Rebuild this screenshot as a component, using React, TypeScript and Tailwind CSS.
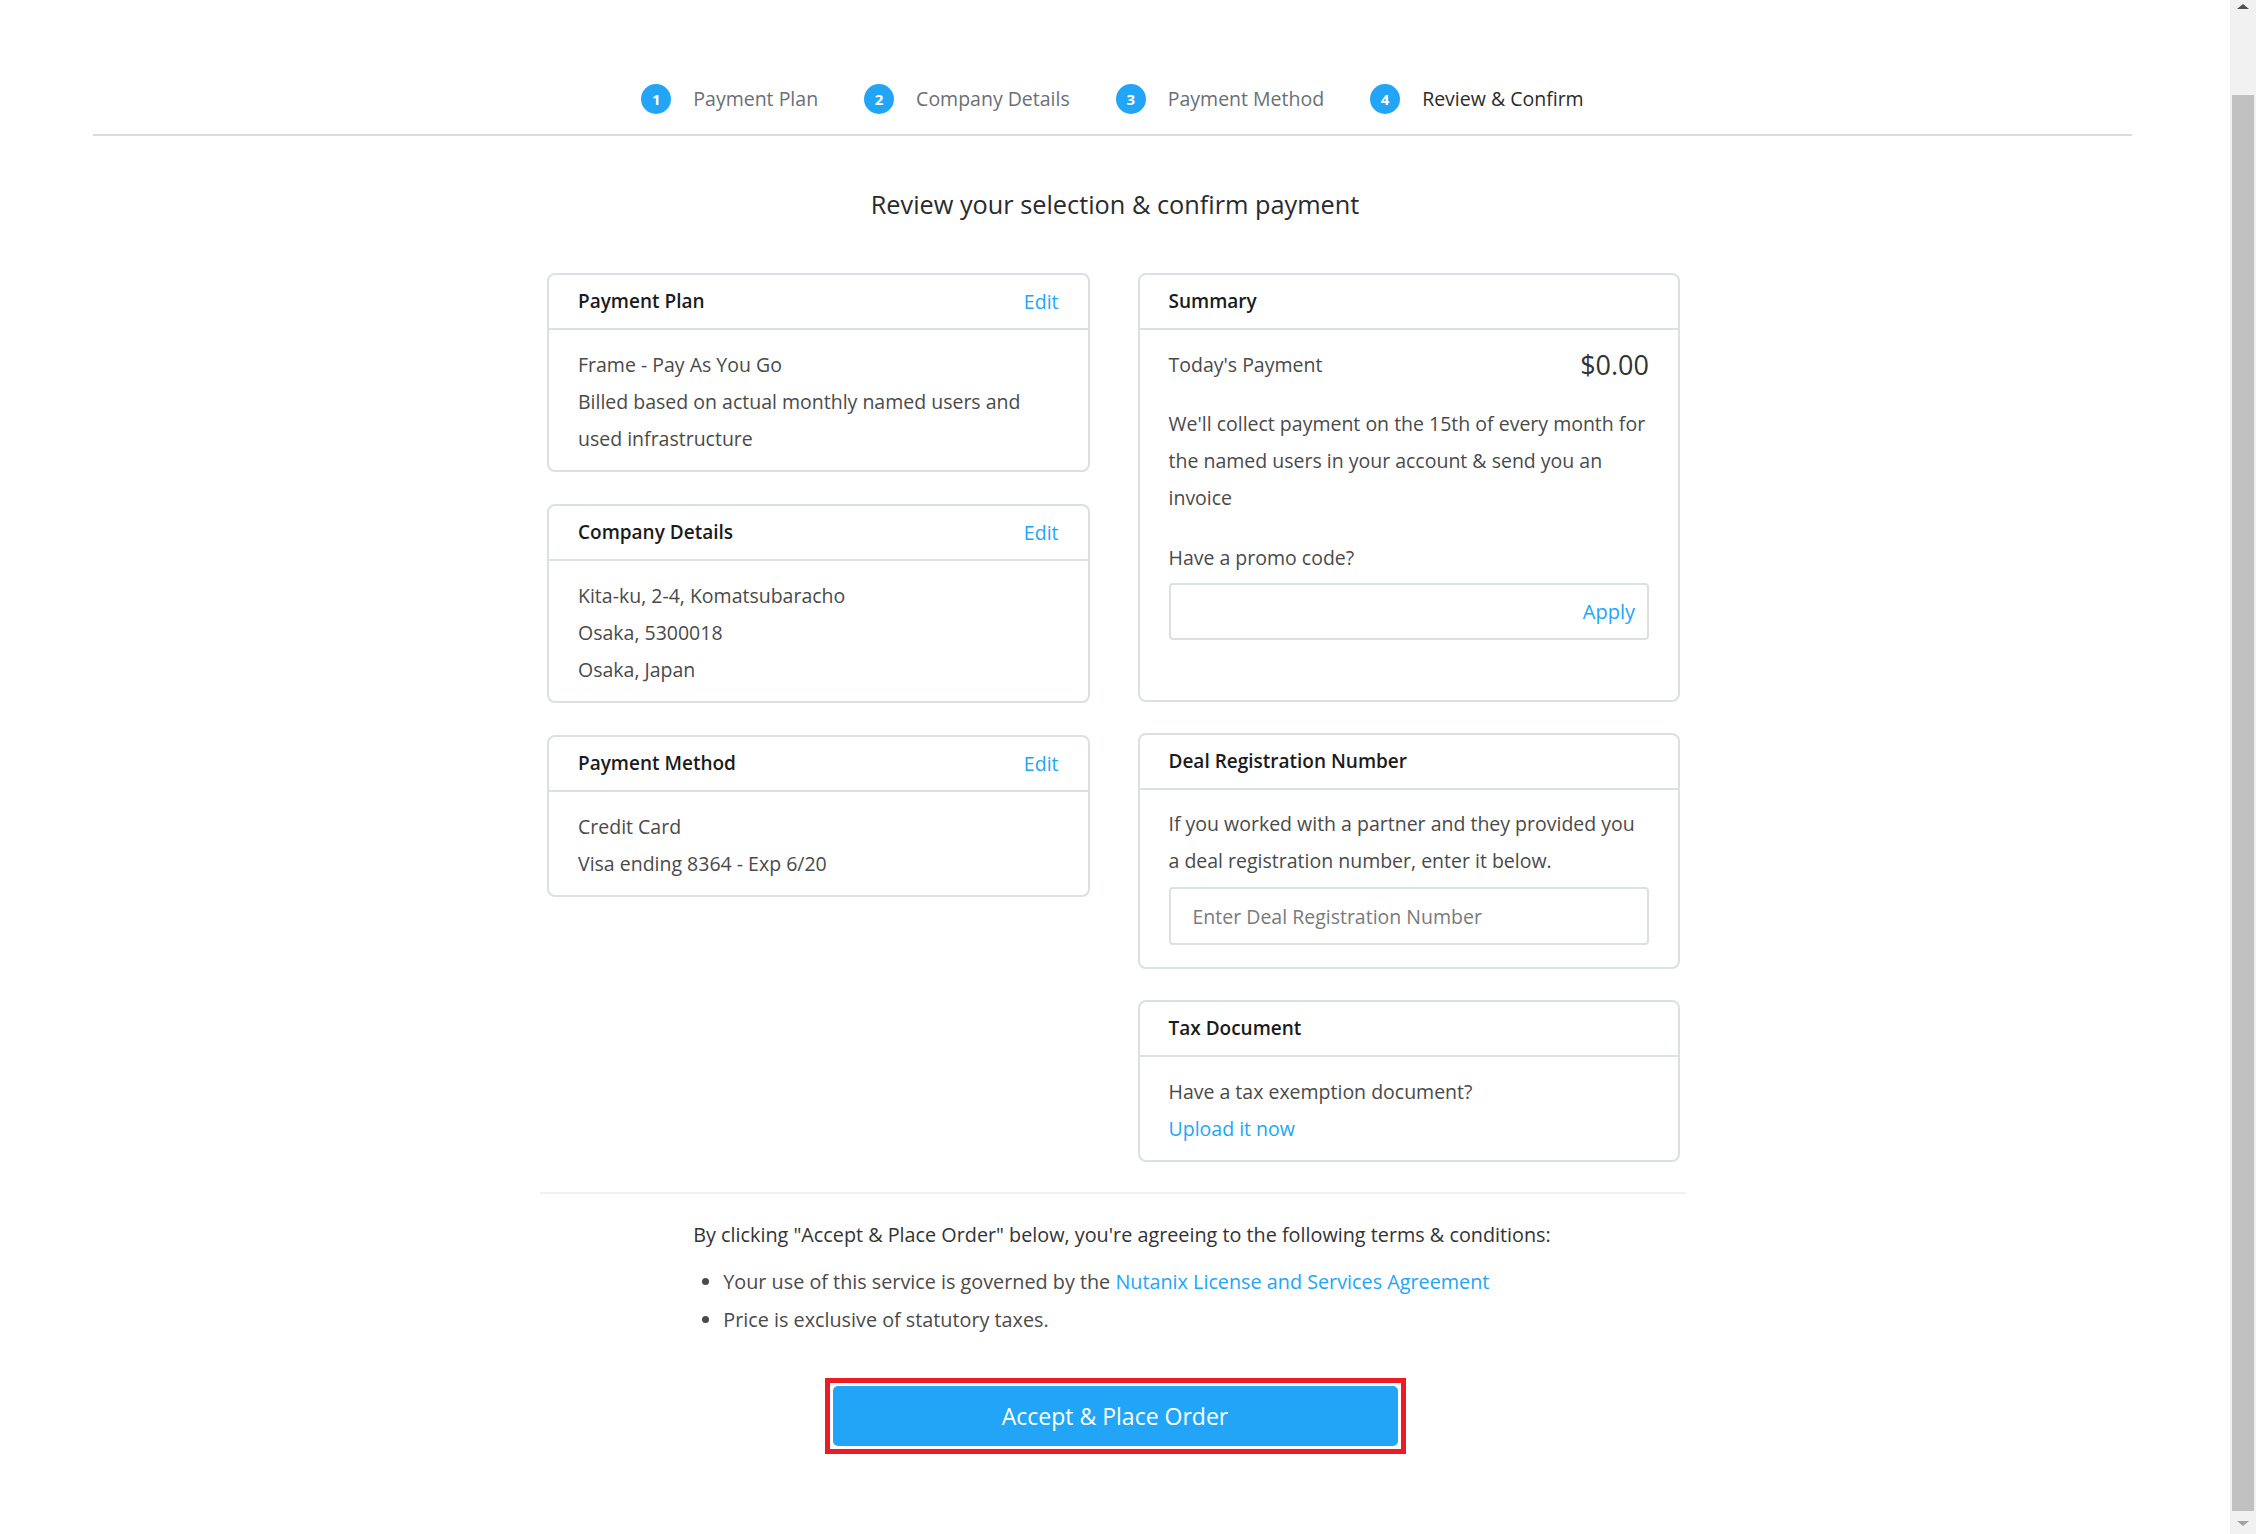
const steps = ["Payment Plan", "Company Details", "Payment Method", "Review & Confirm"];

function Card({
  title,
  edit,
  children,
  bodyClass = "pt-[16px] pb-[13px]",
}: {
  title: string;
  edit?: boolean;
  children: React.ReactNode;
  bodyClass?: string;
}) {
  return (
    <div className="rounded-[8px] border-2 border-[#dcdfe3] bg-white">
      <div className="flex h-[55px] items-center justify-between border-b-2 border-[#dcdfe3] px-[29px]">
        <span className="text-[19px] font-semibold text-[#1b1b1b]">{title}</span>
        {edit && <span className="text-[19.5px] text-[#22a5f6]">Edit</span>}
      </div>
      <div className={`whitespace-nowrap px-[29px] text-[19.5px] leading-[37px] text-[#4a4a4a] ${bodyClass}`}>
        {children}
      </div>
    </div>
  );
}

export default function App() {
  return (
    <div className="flex h-screen w-full overflow-hidden bg-white font-['Open_Sans',sans-serif]">
      <div className="flex-1">
        {/* Stepper */}
        <div className="ml-[93px] mr-[98px] flex justify-center border-b-2 border-[#d8dbe0] pb-[20px] pt-[84px]">
          {steps.map((s, i) => (
            <div key={s} className={`flex items-center gap-[22px] ${i > 0 ? "ml-[46px]" : ""}`}>
              <span className="flex h-[30px] w-[30px] items-center justify-center rounded-full bg-[#22a5f6] text-[15px] font-bold text-white">
                {i + 1}
              </span>
              <span className={`text-[19.5px] ${i === 3 ? "text-[#2b2b2b]" : "text-[#6b6f75]"}`}>{s}</span>
            </div>
          ))}
        </div>

        <h1 className="mt-[53px] text-center text-[25.3px] leading-[31px] text-[#2b2b2b]">
          Review your selection &amp; confirm payment
        </h1>

        <div className="ml-[547px] mt-[53px] grid w-[1133px] grid-cols-2 gap-x-[48px]">
          <div className="flex flex-col gap-[32px]">
            <Card title="Payment Plan" edit>
              <p>Frame - Pay As You Go</p>
              <p>
                Billed based on actual monthly named users and
                <br />
                used infrastructure
              </p>
            </Card>
            <Card title="Company Details" edit>
              <p>Kita-ku, 2-4, Komatsubaracho</p>
              <p>Osaka, 5300018</p>
              <p>Osaka, Japan</p>
            </Card>
            <Card title="Payment Method" edit>
              <p>Credit Card</p>
              <p>Visa ending 8364 - Exp 6/20</p>
            </Card>
          </div>

          <div className="flex flex-col gap-[31px]">
            <Card title="Summary" bodyClass="pt-[16px] pb-[60px]">
              <div className="flex items-center justify-between">
                <span>Today&apos;s Payment</span>
                <span className="text-[27px] text-[#333]">$0.00</span>
              </div>
              <p className="mt-[22px]">
                We&apos;ll collect payment on the 15th of every month for
                <br />
                the named users in your account &amp; send you an
                <br />
                invoice
              </p>
              <p className="mt-[23px]">Have a promo code?</p>
              <div className="mt-[7px] flex h-[57px] items-center justify-end rounded-[4px] border-2 border-[#dcdfe3] pr-[12px]">
                <span className="text-[20px] text-[#22a5f6]">Apply</span>
              </div>
            </Card>
            <Card title="Deal Registration Number" bodyClass="pt-[15px] pb-[22px]">
              <p>
                If you worked with a partner and they provided you
                <br />
                a deal registration number, enter it below.
              </p>
              <div className="mt-[8px] flex h-[58px] items-center rounded-[4px] border-2 border-[#dcdfe3] px-[22px] text-[#7a7a7a]">
                Enter Deal Registration Number
              </div>
            </Card>
            <Card title="Tax Document">
              <p>Have a tax exemption document?</p>
              <p className="text-[#22a5f6]">Upload it now</p>
            </Card>
          </div>
        </div>

        <div className="ml-[540px] mt-[30px] h-[2px] w-[1146px] bg-[#f0f0f0]" />

        <div className="mx-auto mt-[28px] w-fit pl-[14px] text-[19.8px] text-[#333]">
          <p className="leading-[26px]">
            By clicking &quot;Accept &amp; Place Order&quot; below, you&apos;re agreeing to the following terms &amp;
            conditions:
          </p>
          <ul className="mt-[15px] list-disc pl-[30px] leading-[38px] text-[#4a4a4a]">
            <li>
              Your use of this service is governed by the{" "}
              <span className="text-[#22a5f6]">Nutanix License and Services Agreement</span>
            </li>
            <li>Price is exclusive of statutory taxes.</li>
          </ul>
        </div>

        <div className="mx-auto mt-[39px] w-fit border-[5px] border-[#ed1c24] p-[3px]">
          <button className="flex h-[60px] w-[565px] items-center justify-center rounded-[5px] bg-[#22a5f6] text-[23px] font-medium text-white">
            Accept &amp; Place Order
          </button>
        </div>
      </div>

      {/* Scrollbar */}
      <div className="relative flex h-[1534px] w-[26px] flex-col bg-[#f1f1f1] pb-[23px] pt-[95px]">
        <div className="absolute left-1/2 top-[4px] h-0 w-0 -translate-x-1/2 border-x-[6px] border-b-[5px] border-x-transparent border-b-[#505050]" />
        <div className="mx-[2px] flex-1 bg-[#c1c1c1]" />
        <div className="absolute bottom-[8px] left-1/2 h-0 w-0 -translate-x-1/2 border-x-[6px] border-t-[5px] border-x-transparent border-t-[#a3a3a3]" />
      </div>
    </div>
  );
}
